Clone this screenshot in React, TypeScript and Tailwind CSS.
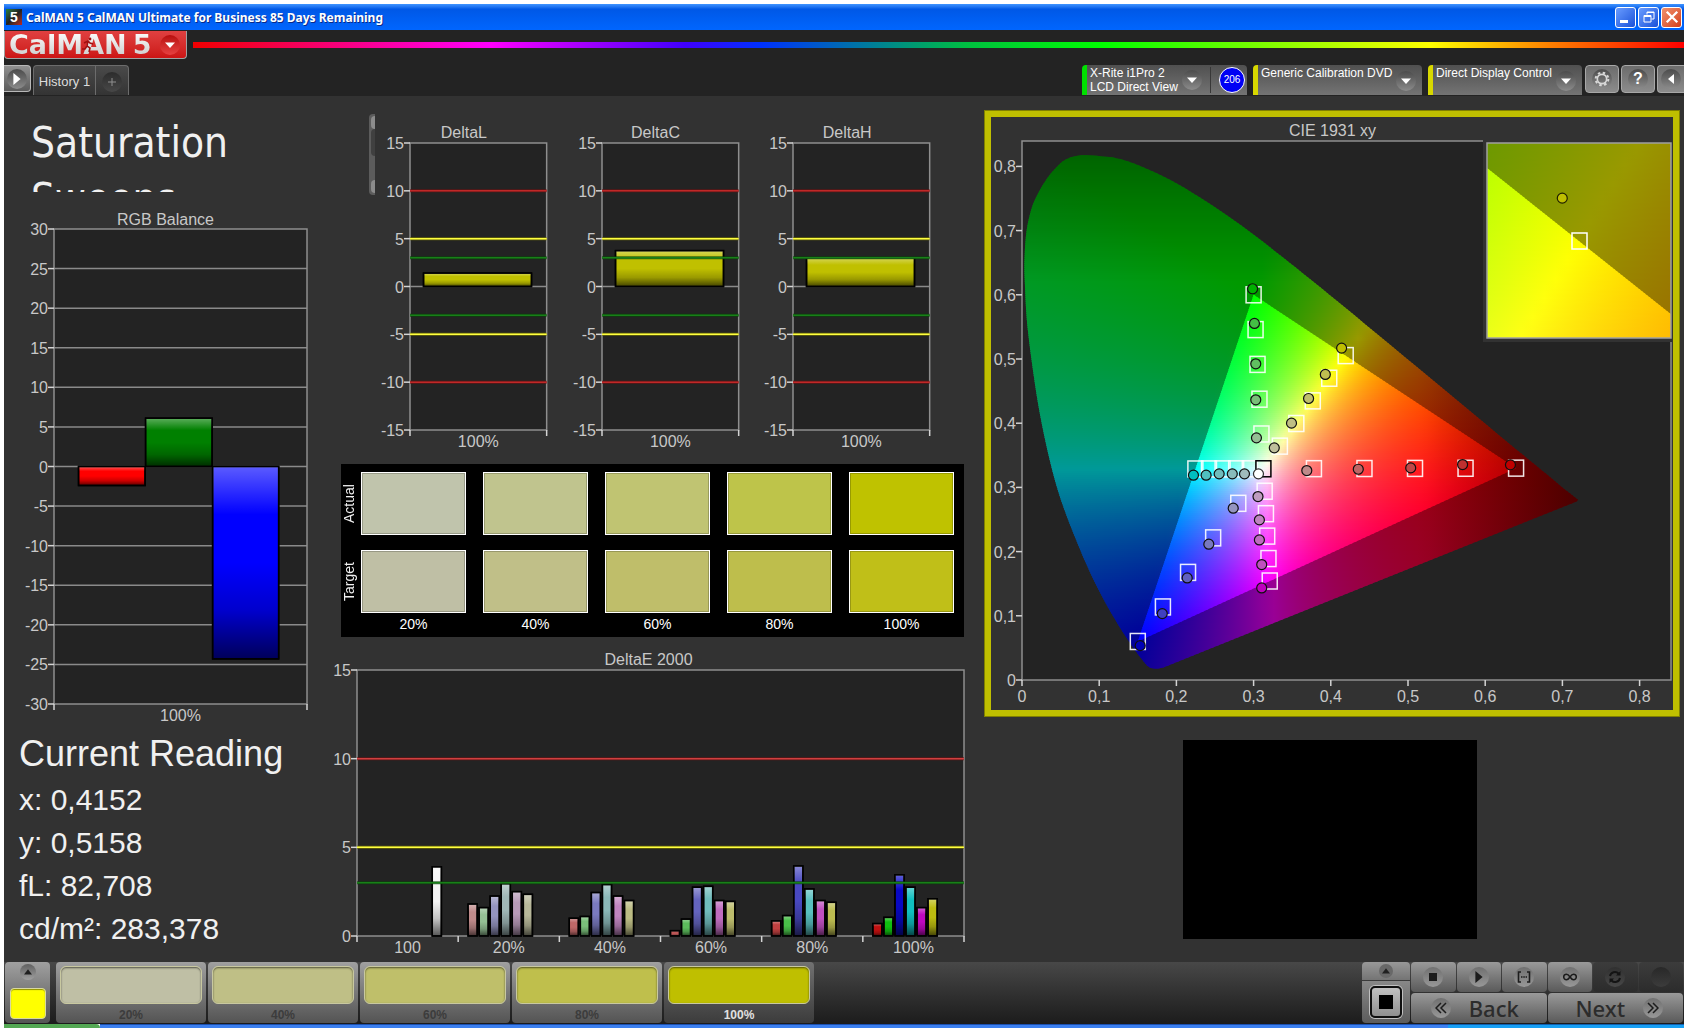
import React, { useMemo } from "react";

type Pt = [number, number];

/* ---------- charts ---------- */

type Bar = { x: number; w: number; v: number; color: string };
type Line = { v: number; color: string; edge: string };

function Chart(props: {
  id: string;
  title: string;
  min: number;
  max: number;
  ticks: number[];
  grid?: number[];
  bars: Bar[];
  lines?: Line[];
  labels: string[];
  className: string;
}) {
  const { id, title, min, max, ticks, grid = [], bars, lines = [], labels, className } = props;
  const pos = (v: number) => ((max - v) / (max - min)) * 100;
  const pc = (n: number) => `${n}%`;
  return (
    <figure className="flex flex-col">
      <figcaption className="h-[18px] text-center text-base leading-[18px] text-[#c8c8c8]">{title}</figcaption>
      <svg role="img" aria-label={title} className={className} overflow="visible">
        <defs>
          <linearGradient id={`${id}-gloss`} x1="0" y1="0" x2="0" y2="1">
            <stop offset="0" stopColor="#fff" stopOpacity="0.36" />
            <stop offset="0.25" stopColor="#fff" stopOpacity="0" />
            <stop offset="0.5" stopColor="#000" stopOpacity="0" />
            <stop offset="0.75" stopColor="#000" stopOpacity="0.2" />
            <stop offset="1" stopColor="#000" stopOpacity="0.65" />
          </linearGradient>
        </defs>
        <rect width="100%" height="100%" fill="#232323" />
        {grid.map((v) => (
          <line key={v} x1="0" x2="100%" y1={pc(pos(v))} y2={pc(pos(v))} stroke="#8a8a8a" strokeWidth="1.5" />
        ))}
        <rect width="100%" height="100%" fill="none" stroke="#8e8e8e" strokeWidth="1.5" />
        {bars.map((b, i) => {
          const top = pos(Math.max(b.v, 0));
          const h = (Math.abs(b.v) / (max - min)) * 100;
          return (
            <g key={i} stroke="#000" strokeWidth="1.5">
              <rect x={pc(b.x)} y={pc(top)} width={pc(b.w)} height={pc(h)} fill={b.color} />
              <rect x={pc(b.x)} y={pc(top)} width={pc(b.w)} height={pc(h)} fill={`url(#${id}-gloss)`} />
            </g>
          );
        })}
        {lines.map((l) => (
          <g key={l.v}>
            <line x1="0" x2="100%" y1={pc(pos(l.v))} y2={pc(pos(l.v))} stroke={l.edge} strokeWidth="3" strokeOpacity="0.75" />
            <line x1="0" x2="100%" y1={pc(pos(l.v))} y2={pc(pos(l.v))} stroke={l.color} strokeWidth="1.5" />
          </g>
        ))}
        {ticks.map((v) => (
          <g key={v}>
            <line x1="-6" x2="0" y1={pc(pos(v))} y2={pc(pos(v))} stroke="#d4d4d4" strokeWidth="1.5" />
            <text x="-6" y={pc(pos(v))} dy="6" textAnchor="end" fontSize="16" fill="#c8c8c8">
              {v}
            </text>
          </g>
        ))}
        {labels.map((l, i) => (
          <text key={l} x={pc(((i + 0.5) / labels.length) * 100)} y="100%" dy="17" textAnchor="middle" fontSize="16" fill="#c8c8c8">
            {l}
          </text>
        ))}
        {[...labels, ""].map((_, i) => (
          <svg key={i} x={pc((i / labels.length) * 100)} y="100%" overflow="visible">
            <line x1="0" x2="0" y1="0" y2="6" stroke="#d4d4d4" strokeWidth="1.5" />
          </svg>
        ))}
      </svg>
    </figure>
  );
}

const RED = { color: "#c02828", edge: "#701010" };
const YELLOW = { color: "#ffff40", edge: "#7a7a00" };
const GREEN = { color: "#188018", edge: "#0a440a" };

const deltaLines: Line[] = [
  { v: 10, ...RED },
  { v: 5, ...YELLOW },
  { v: 3, ...GREEN },
  { v: -3, ...GREEN },
  { v: -5, ...YELLOW },
  { v: -10, ...RED },
];

const deltaEGroups: { values: number[]; colors: string[] }[] = [
  { values: [1.8, 1.6, 2.25, 2.95, 2.5, 2.35], colors: ["#bf8a8a", "#94bf94", "#9494bf", "#a0b8b8", "#b89ab8", "#b8b89a"] },
  { values: [1, 1.1, 2.45, 2.9, 2.25, 2], colors: ["#bf6868", "#7abf7a", "#7a7abf", "#8ab8b8", "#bf84bf", "#bcbc84"] },
  { values: [0.3, 0.95, 2.75, 2.8, 2, 1.95], colors: ["#bf5858", "#5cbc5c", "#6464bf", "#70bcbc", "#bf6cbf", "#bcbc6c"] },
  { values: [0.85, 1.15, 3.95, 2.65, 2, 1.9], colors: ["#bf4040", "#48bf48", "#4848c0", "#58bfbf", "#bf50bf", "#bcbc50"] },
  { values: [0.7, 1.05, 3.45, 2.75, 1.6, 2.1], colors: ["#bf1010", "#10bf10", "#0808c4", "#10bfbf", "#bf08bf", "#bcbc10"] },
];

const deltaEBars: Bar[] = [
  { x: 12.4, w: 1.5, v: 3.9, color: "#f4f4f4" },
  ...deltaEGroups.flatMap((g, gi) =>
    g.values.map((v, i) => ({ x: 18.3 + gi * 16.67 + i * 1.82, w: 1.5, v, color: g.colors[i] }))
  ),
];

/* ---------- chromaticity diagram ---------- */

const W = 649;
const H = 539;
const SX = 772;
const SY = 642;
const px = (x: number) => x * SX;
const py = (y: number) => H - y * SY;

function chroma(x: number, y: number, inside: boolean): string {
  const yy = Math.max(y, 0.004);
  const X = x / yy;
  const Z = (1 - x - yy) / yy;
  const rgb = [
    3.2406 * X - 1.5372 - 0.4986 * Z,
    -0.9689 * X + 1.8758 + 0.0415 * Z,
    0.0557 * X - 0.204 + 1.057 * Z,
  ].map((c) => Math.max(c, 0));
  const m = Math.max(...rgb, 0.0001);
  const clamp = (n: number) => Math.min(1, Math.max(0, n));
  const f =
    (inside ? 1 : 0.6) *
    (1 - 0.5 * clamp((x - 0.52) / 0.2)) *
    (1 - 0.35 * clamp((y - 0.62) / 0.2));
  return `rgb(${rgb.map((c) => Math.round((255 * f * c) / m)).join(",")})`;
}

function Field(props: {
  id: string;
  inside: boolean;
  box: [number, number, number, number];
  toXY: (u: number, v: number) => Pt;
  row?: number;
  step?: number;
}) {
  const { id, inside, box, toXY, row = 2, step = 12 } = props;
  const [x0, y0, x1, y1] = box;
  const n = Math.ceil((x1 - x0) / step);
  const rows: number[] = [];
  for (let y = y0; y < y1; y += row) rows.push(y);
  return (
    <g>
      {rows.map((y) => (
        <React.Fragment key={y}>
          <linearGradient id={`${id}${y}`} gradientUnits="userSpaceOnUse" x1={x0} x2={x1} y1="0" y2="0">
            {Array.from({ length: n + 1 }, (_, i) => {
              const [cx, cy] = toXY(x0 + ((x1 - x0) * i) / n, y + row / 2);
              return <stop key={i} offset={i / n} stopColor={chroma(cx, cy, inside)} />;
            })}
          </linearGradient>
          <rect x={x0} y={y} width={x1 - x0} height={row + 1} fill={`url(#${id}${y})`} />
        </React.Fragment>
      ))}
    </g>
  );
}

const locus: Pt[] = [
  [0.184, 0.02], [0.174, 0.0175], [0.165, 0.02], [0.158, 0.028], [0.143, 0.052], [0.122, 0.091], [0.0993, 0.14], [0.0738, 0.207],
  [0.0454, 0.3], [0.0235, 0.4127], [0.0082, 0.5384], [0.0036, 0.62], [0.0034, 0.66], [0.006, 0.7], [0.0125, 0.735],
  [0.0203, 0.757], [0.03, 0.777], [0.041, 0.794], [0.0554, 0.81], [0.0725, 0.8165], [0.0963, 0.8165], [0.1256, 0.812],
  [0.1547, 0.8], [0.1929, 0.7785], [0.2296, 0.7523], [0.2658, 0.7233], [0.3016, 0.6923], [0.3373, 0.6589], [0.3731, 0.6245],
  [0.4441, 0.5547], [0.5125, 0.4866], [0.5752, 0.4242], [0.627, 0.3725], [0.6658, 0.334], [0.7, 0.3], [0.717, 0.284],
  [0.72, 0.28], [0.716, 0.277],
];

function smooth(points: Pt[]): string {
  const p = points.map(([x, y]) => [px(x), py(y)]);
  const f = (n: number) => n.toFixed(1);
  let d = `M${f(p[0][0])} ${f(p[0][1])}`;
  for (let i = 0; i < p.length - 1; i++) {
    const a = p[Math.max(i - 1, 0)];
    const b = p[i];
    const c = p[i + 1];
    const e = p[Math.min(i + 2, p.length - 1)];
    d += `C${f(b[0] + (c[0] - a[0]) / 6)} ${f(b[1] + (c[1] - a[1]) / 6)} ${f(c[0] - (e[0] - b[0]) / 6)} ${f(c[1] - (e[1] - b[1]) / 6)} ${f(c[0])} ${f(c[1])}`;
  }
  return d + "Z";
}

const WHITE: Pt = [0.3127, 0.329];
const sweeps: { name: string; end: Pt; actual: Pt[]; fills: string[] }[] = [
  {
    name: "red", end: [0.64, 0.33],
    actual: [[0.3689, 0.3262], [0.4356, 0.3283], [0.5035, 0.3304], [0.5707, 0.3356], [0.6327, 0.3351]],
    fills: ["#bf8a8a", "#bf6464", "#bf4848", "#bf3030", "#c00000"],
  },
  {
    name: "green", end: [0.3, 0.6],
    actual: [[0.3037, 0.3772], [0.3028, 0.4364], [0.3028, 0.4925], [0.3011, 0.5554], [0.2987, 0.6094]],
    fills: ["#94bf94", "#78bf78", "#60bf60", "#44bf44", "#00b000"],
  },
  {
    name: "blue", end: [0.15, 0.06],
    actual: [[0.2736, 0.2676], [0.242, 0.2115], [0.214, 0.159], [0.1817, 0.1034], [0.1531, 0.0535]],
    fills: ["#9494bf", "#7878c0", "#6060c0", "#4040c0", "#0000b8"],
  },
  {
    name: "cyan", end: [0.2246, 0.3287],
    actual: [[0.2882, 0.3211], [0.2724, 0.3211], [0.2554, 0.3211], [0.2385, 0.319], [0.2221, 0.319]],
    fills: ["#a0bcbc", "#88bcbc", "#70bcbc", "#50bfbf", "#00bfbf"],
  },
  {
    name: "magenta", end: [0.3209, 0.1542],
    actual: [[0.3057, 0.2857], [0.3075, 0.2494], [0.3075, 0.2182], [0.3105, 0.1798], [0.3105, 0.1434]],
    fills: ["#bf9cbf", "#bf84bf", "#bf6cbf", "#bf50bf", "#bf00bf"],
  },
  {
    name: "yellow", end: [0.4193, 0.5053],
    actual: [[0.3268, 0.3616], [0.3491, 0.4001], [0.3712, 0.4385], [0.3929, 0.4759], [0.414, 0.517]],
    fills: ["#bfbf9c", "#bfbf84", "#bfbf6c", "#bfbf50", "#bfbf00"],
  },
];

function CieDiagram() {
  const shape = useMemo(() => smooth(locus), []);
  const R: Pt = [0.64, 0.33];
  const G: Pt = [0.3, 0.6];
  const B: Pt = [0.15, 0.06];
  const tri = [R, G, B].map(([x, y]) => `${px(x)},${py(y)}`).join(" ");
  const mainXY = (u: number, v: number): Pt => [u / SX, (H - v) / SY];

  const ix = 465;
  const iy = 2;
  const iw = 184;
  const ih = 195;
  const cx = 557;
  const cy = 100;
  const zoom = 4080;
  const insetXY = (u: number, v: number): Pt => [0.4193 + (u - cx) / zoom, 0.5053 - (v - cy) / zoom];
  const zx = (x: number) => cx + (x - 0.4193) * zoom;
  const zy = (y: number) => cy - (y - 0.5053) * zoom;
  const edge = (x: number) => 0.6 - ((x - 0.3) * 0.27) / 0.34;

  return (
    <svg role="img" aria-label="CIE 1931 xy" viewBox={`0 0 ${W} ${H}`} className="w-full" overflow="visible">
      <defs>
        <clipPath id="locus"><path d={shape} /></clipPath>
        <clipPath id="gamut"><polygon points={tri} /></clipPath>
        <clipPath id="inset-gamut">
          <polygon points={`${ix},${zy(edge(insetXY(ix, 0)[0]))} ${ix + iw},${zy(edge(insetXY(ix + iw, 0)[0]))} ${ix + iw},${iy + ih} ${ix},${iy + ih}`} />
        </clipPath>
        <clipPath id="inset-box"><rect x={ix} y={iy} width={iw} height={ih} /></clipPath>
      </defs>
      <rect width={W} height={H} fill="#232323" stroke="#8e8e8e" strokeWidth="1.5" />
      <g clipPath="url(#locus)">
        <Field id="o" inside={false} box={[0, 12, 564, 530]} toXY={mainXY} />
      </g>
      <g clipPath="url(#gamut)">
        <Field id="i" inside box={[110, 150, 500, 504]} toXY={mainXY} step={8} />
      </g>
      {sweeps.map((s) => (
        <g key={s.name} fill="none" stroke="#fff" strokeOpacity="0.9" strokeWidth="1.5">
          {[0.2, 0.4, 0.6, 0.8, 1].map((t) => (
            <rect
              key={t}
              x={px(WHITE[0] + (s.end[0] - WHITE[0]) * t) - 7.5}
              y={py(WHITE[1] + (s.end[1] - WHITE[1]) * t) - 8}
              width="15"
              height="16"
            />
          ))}
        </g>
      ))}
      <rect x={px(WHITE[0]) - 7.5} y={py(WHITE[1]) - 8} width="15" height="16" fill="none" stroke="#000" strokeWidth="1.5" />
      {sweeps.map((s) => (
        <g key={s.name} stroke="#101010" strokeWidth="1.2">
          {s.actual.map(([x, y], i) => (
            <circle key={i} cx={px(x)} cy={py(y)} r="5" fill={s.fills[i]} />
          ))}
        </g>
      ))}
      <circle cx={px(0.3063)} cy={py(0.3211)} r="5" fill="#fff" stroke="#303030" strokeWidth="1.2" />

      <rect x={ix - 4} y={iy - 3} width={iw + 5} height={ih + 7} fill="#323232" />
      <g clipPath="url(#inset-box)">
        <Field id="p" inside={false} box={[ix, iy, ix + iw, iy + ih]} toXY={insetXY} />
        <g clipPath="url(#inset-gamut)">
          <Field id="q" inside box={[ix, iy, ix + iw, iy + ih]} toXY={insetXY} />
        </g>
      </g>
      <rect x={ix} y={iy} width={iw} height={ih} fill="none" stroke="#a0a0a0" strokeWidth="1.5" />
      <rect x={cx - 7} y={cy - 8} width="15" height="16" fill="none" stroke="#fff" strokeWidth="1.5" />
      <circle cx={zx(0.4152)} cy={zy(0.5158)} r="5" fill="#bfbf00" stroke="#202000" strokeWidth="1.2" />

      {Array.from({ length: 9 }, (_, i) => {
        const t = i === 0 ? "0" : `0,${i}`;
        return (
          <g key={i} stroke="#d4d4d4" strokeWidth="1.5">
            <line x1={px(i / 10)} x2={px(i / 10)} y1={H} y2={H + 6} />
            <line x1="-6" x2="0" y1={py(i / 10)} y2={py(i / 10)} />
            <text stroke="none" fill="#c8c8c8" fontSize="16" x={px(i / 10)} y={H + 22} textAnchor="middle">{t}</text>
            <text stroke="none" fill="#c8c8c8" fontSize="16" x="-6" y={py(i / 10) + 6} textAnchor="end">{t}</text>
          </g>
        );
      })}
    </svg>
  );
}

/* ---------- small parts ---------- */

function Knob({ children, className = "from-[#4c4c4c] to-[#8c8c8c]" }: { children?: React.ReactNode; className?: string }) {
  return (
    <span className={`flex size-5 shrink-0 items-center justify-center rounded-full bg-gradient-to-b ${className}`}>
      {children}
    </span>
  );
}

function Triangle({ d, className }: { d: string; className: string }) {
  return (
    <svg viewBox="0 0 10 10" className={className} aria-hidden="true">
      <path d={d} fill="currentColor" />
    </svg>
  );
}
const DOWN = "M0 2.5H10L5 8Z";
const UP = "M0 8H10L5 1.5Z";
const RIGHT = "M2 0V10L8 5Z";
const LEFT = "M8 0V10L2 5Z";

function SourceSelect({ label, option, className }: { label: string; option: string; className: string }) {
  return (
    <div className={`relative h-[30px] rounded-t border-l-[5px] border-[#d8d800] bg-gradient-to-b from-[#505050] to-[#747474] ${className}`}>
      <select aria-label={label} className="block h-4 w-full appearance-none bg-transparent pl-[3px] pr-5 text-xs text-white outline-none">
        <option>{option}</option>
      </select>
      <span className="pointer-events-none absolute bottom-1 right-1.5">
        <Knob><Triangle d={DOWN} className="size-2.5 text-white" /></Knob>
      </span>
    </div>
  );
}

const actual = ["bg-[#c0c4ac]", "bg-[#c0c48e]", "bg-[#c0c472]", "bg-[#bec44a]", "bg-[#bfc200]"];
const target = ["bg-[#bfbfa5]", "bg-[#c0bf88]", "bg-[#bfbe6a]", "bg-[#bebe4c]", "bg-[#c0bf18]"];
const steps = [
  { label: "20%", fill: "bg-[#bfbfa5]" },
  { label: "40%", fill: "bg-[#bfbf86]" },
  { label: "60%", fill: "bg-[#bfbf6a]" },
  { label: "80%", fill: "bg-[#bfbf4c]" },
  { label: "100%", fill: "bg-[#bfbf00]" },
];

function SwatchRow({ name, fills }: { name: string; fills: string[] }) {
  return (
    <>
      <span className="flex w-4 rotate-180 items-center justify-center text-sm leading-4 text-[#f0f0f0] [writing-mode:vertical-rl]">{name}</span>
      {fills.map((c) => (
        <span key={c} className={`h-[63px] border border-white ring-1 ring-inset ring-black/20 ${c}`} />
      ))}
    </>
  );
}

const keyBase = "flex h-[30px] items-center justify-center rounded-sm bg-gradient-to-b";
const keyOn = "from-[#9a9a9a] to-[#5a5a5a]";
const keyOff = "from-[#3c3c3c] to-[#2c2c2c]";
const keyKnob = "from-[#707070] to-[#989898] text-[#1c1c1c]";

/* ---------- page ---------- */

export default function App() {
  return (
    <div className="flex min-h-screen flex-col bg-white px-1 pt-1 font-['Liberation_Sans',Arial,sans-serif]">
      <header>
        <div className="flex h-[26px] items-center gap-1 bg-gradient-to-b from-[#3f94ff] via-[#0058e6] via-20% to-[#0066ff] px-0.5">
          <span className="flex size-4 items-center justify-center bg-gradient-to-br from-[#1b8040] via-[#202020] to-[#c02020] text-sm font-bold leading-4 text-white">5</span>
          <h1 className="flex-1 pt-0.5 font-['Noto_Sans','Open_Sans',sans-serif] text-xs font-bold text-white [text-shadow:1px_1px_0_#0a2a88]">
            CalMAN 5 CalMAN Ultimate for Business 85 Days Remaining
          </h1>
          <div className="flex gap-0.5">
            <button aria-label="Minimize" className="flex size-[21px] items-end rounded-[3px] border border-white bg-gradient-to-br from-[#6a9cff] to-[#1a4fd8] p-1">
              <span className="h-[3px] w-2 bg-white" />
            </button>
            <button aria-label="Restore" className="flex size-[21px] items-center justify-center rounded-[3px] border border-white bg-gradient-to-br from-[#6a9cff] to-[#1a4fd8] text-white">
              <svg viewBox="0 0 12 12" className="size-3" fill="none" stroke="currentColor">
                <path d="M4 3.5V1H11V8H8.5M4 1.5H11M1 4.5H8V11H1ZM1 5.5H8" />
              </svg>
            </button>
            <button aria-label="Close" className="flex size-[21px] items-center justify-center rounded-[3px] border border-white bg-gradient-to-br from-[#f0906c] to-[#d43c14] text-white">
              <svg viewBox="0 0 12 12" className="size-3.5" stroke="currentColor" strokeWidth="2">
                <path d="M1.5 1.5L10.5 10.5M10.5 1.5L1.5 10.5" />
              </svg>
            </button>
          </div>
        </div>

        <div className="bg-[#232323]">
          <div className="flex h-[35px] items-start gap-1.5 pt-px">
            <button className="flex h-7 w-[183px] items-center justify-between rounded-b border border-t-0 border-[#a0a0a0] bg-gradient-to-b from-[#e04040] to-[#cc1414] pl-1 pr-1.5">
              <span className="relative flex gap-1.5 bg-gradient-to-b from-white to-[#c8c8c8] bg-clip-text font-['DejaVu_Sans',sans-serif] text-[27px] font-bold leading-7 text-transparent">
                <span>CalMAN</span>
                <span>5</span>
                <svg viewBox="0 0 12 16" className="absolute left-[73px] top-1.5 h-4 w-3" fill="none" stroke="#a01010" strokeWidth="1.6">
                  <circle cx="8" cy="2" r="1.4" fill="#a01010" stroke="none" />
                  <path d="M2 6L6 4L8 6L11 7M6 4L5 9L8 11L7 15M5 9L3 12L0 12" />
                </svg>
              </span>
              <Knob className="from-[#b80c0c] to-[#e84040]"><Triangle d={DOWN} className="size-2.5 text-white" /></Knob>
            </button>
            <div className="mt-[11px] h-1.5 flex-1 bg-[linear-gradient(90deg,#f00000,#ff00ff_20%,#4000ff_33%,#0030ff_38%,#00c040_52%,#00ff00_61%,#ffff00_83%,#ff8000_91%,#ff0000)]" />
          </div>

          <div className="flex h-[31px] items-start justify-between">
            <nav className="flex items-start gap-0.5">
              <button aria-label="Show panel" className="flex h-[27px] w-[27px] items-center justify-center rounded-r border border-l-0 border-[#b8b8b8] bg-gradient-to-b from-[#909090] to-[#5c5c5c]">
                <Knob><Triangle d={RIGHT} className="size-3 text-white" /></Knob>
              </button>
              <div className="flex h-[30px] rounded-t border border-b-0 border-[#6c6c6c] bg-gradient-to-b from-[#4a4a4a] to-[#343434]">
                <button className="w-[62px] border-r border-[#6c6c6c] pt-0.5 text-[13px] text-[#dcdcdc]">History 1</button>
                <button aria-label="Add tab" className="flex w-8 items-center justify-center pt-0.5">
                  <Knob className="from-[#2c2c2c] to-[#484848]">
                    <svg viewBox="0 0 8 8" className="size-2" stroke="#909090"><path d="M4 0V8M0 4H8" /></svg>
                  </Knob>
                </button>
              </div>
            </nav>
            <div className="flex items-start">
              <button className="flex h-[30px] w-[165px] items-center rounded-t border-l-[5px] border-[#00e000] bg-gradient-to-b from-[#505050] to-[#747474] pl-[3px] pr-0.5 text-left text-xs leading-[14px] text-white">
                <span className="w-[92px]">X-Rite i1Pro 2<br />LCD Direct View</span>
                <Knob><Triangle d={DOWN} className="size-2.5 text-white" /></Knob>
                <span className="ml-2 h-[26px] w-px bg-[#383838]" />
                <span className="ml-auto flex size-[26px] items-center justify-center rounded-full border border-white bg-[#0000f4] text-[10px] text-white">206</span>
              </button>
              <SourceSelect label="Source" option="Generic Calibration DVD" className="ml-1.5 w-[169px]" />
              <SourceSelect label="Display control" option="Direct Display Control" className="ml-1.5 w-[154px]" />
              <button aria-label="Settings" className="ml-[3px] flex h-7 w-[34px] items-center justify-center rounded border border-[#a8a8a8] bg-gradient-to-b from-[#6c6c6c] to-[#8c8c8c]">
                <Knob>
                  <svg viewBox="0 0 24 24" className="size-4" fill="none" stroke="#d8d8d8">
                    <circle cx="12" cy="12" r="7" strokeWidth="2.5" />
                    <circle cx="12" cy="12" r="9.5" strokeWidth="3" strokeDasharray="3.73 3.73" />
                  </svg>
                </Knob>
              </button>
              <button aria-label="Help" className="ml-0.5 flex h-7 w-[34px] items-center justify-center rounded border border-[#a8a8a8] bg-gradient-to-b from-[#6c6c6c] to-[#8c8c8c]">
                <Knob><span className="text-base font-bold text-white">?</span></Knob>
              </button>
              <button aria-label="Hide panel" className="ml-0.5 flex h-7 w-[27px] items-center justify-center rounded-l border border-r-0 border-[#a8a8a8] bg-gradient-to-b from-[#6c6c6c] to-[#8c8c8c]">
                <Knob><Triangle d={LEFT} className="size-2.5 text-white" /></Knob>
              </button>
            </div>
          </div>
        </div>
      </header>

      <main className="grid flex-1 grid-cols-[317fr_623fr_696fr] content-start gap-x-5 bg-[#323232] pr-1">
        <section className="flex flex-col">
          <h2 className="ml-[27px] mt-[19px] h-[77px] w-56 overflow-hidden font-['DejaVu_Sans_Condensed','DejaVu_Sans',sans-serif] text-[42px] leading-[56px] text-[#f0f0f0]">
            Saturation Sweeps
          </h2>
          <div className="mt-[19px] pl-5 pr-3.5">
            <Chart
              id="rgb"
              title="RGB Balance"
              min={-30}
              max={30}
              ticks={[30, 25, 20, 15, 10, 5, 0, -5, -10, -15, -20, -25, -30]}
              grid={[25, 20, 15, 10, 5, 0, -5, -10, -15, -20, -25]}
              labels={["100%"]}
              bars={[
                { x: 9.7, w: 26.3, v: -2.4, color: "#ff0000" },
                { x: 36.2, w: 26.3, v: 6.1, color: "#008000" },
                { x: 62.7, w: 26.1, v: -24.3, color: "#0000ff" },
              ]}
              className="ml-[30px] h-[475px] w-[calc(100%-30px)]"
            />
          </div>
          <div className="mt-[29px] pl-[15px] text-[#f0f0f0]">
            <h2 className="text-4xl leading-[42px]">Current Reading</h2>
            <div className="mt-[3px] text-[30px] leading-[43px]">
              <p>x: 0,4152</p>
              <p>y: 0,5158</p>
              <p>fL: 82,708</p>
              <p>cd/m²: 283,378</p>
            </div>
          </div>
        </section>

        <section className="flex flex-col">
          <div className="flex pt-[18px]">
            <div className="ml-7 flex h-[81px] w-1.5 flex-col justify-between rounded-l-sm bg-[#5c5c5c] pl-0.5">
              <span className="mt-0.5 h-3.5 rounded-l bg-[#8c8c8c]" />
              <span className="mb-6 h-7 rounded-l bg-[#404040]" />
              <span className="mb-0.5 h-3.5 rounded-l bg-[#8c8c8c]" />
            </div>
            <div className="ml-1.5 mr-[34px] mt-2.5 grid flex-1 grid-cols-3 gap-x-[26px]">
              {[
                { id: "dl", title: "DeltaL", v: 1.4 },
                { id: "dc", title: "DeltaC", v: 3.75 },
                { id: "dh", title: "DeltaH", v: 3 },
              ].map((c) => (
                <Chart
                  key={c.id}
                  id={c.id}
                  title={c.title}
                  min={-15}
                  max={15}
                  ticks={[15, 10, 5, 0, -5, -10, -15]}
                  grid={[0]}
                  labels={["100%"]}
                  lines={deltaLines}
                  bars={[{ x: 9.9, w: 79, v: c.v, color: "#c0c000" }]}
                  className="ml-[29px] mt-px h-[287px] w-[calc(100%-29px)]"
                />
              ))}
            </div>
          </div>

          <div className="mt-[34px] grid h-[173px] grid-cols-[3px_repeat(5,1fr)] grid-rows-[63px_63px_auto] gap-x-[17px] gap-y-[15px] bg-black pr-[10px] pt-2">
            <SwatchRow name="Actual" fills={actual} />
            <SwatchRow name="Target" fills={target} />
            <span />
            {steps.map((s) => (
              <span key={s.label} className="-mt-3 text-center text-sm leading-4 text-white">{s.label}</span>
            ))}
          </div>

          <div className="-ml-2 mt-3.5">
            <Chart
              id="de"
              title="DeltaE 2000"
              min={0}
              max={15}
              ticks={[15, 10, 5, 0]}
              labels={["100", "20%", "40%", "60%", "80%", "100%"]}
              lines={[{ v: 10, color: "#d04040", edge: "#701010" }, { v: 5, ...YELLOW }, { v: 3, ...GREEN }]}
              bars={deltaEBars}
              className="ml-6 mt-px h-[266px] w-[calc(100%-24px)]"
            />
          </div>
        </section>

        <section className="flex flex-col pt-[14px]">
          <figure className="border-[7px] border-[#bfbf00] bg-[#323232] pb-[30px] pl-[31px] pr-0.5 outline-1 -outline-offset-1 outline-[#808000]">
            <figcaption className="pb-px pr-7 pt-[5px] text-center text-base leading-[18px] text-[#c8c8c8]">CIE 1931 xy</figcaption>
            <CieDiagram />
          </figure>
          <div className="mr-1 mt-[23px] h-[199px] w-[294px] self-center bg-black" />
        </section>
      </main>

      <footer>
        <div className="flex h-[62px] justify-between bg-gradient-to-b from-[#484848] to-[#1c1c1c] px-px pb-px">
          <div className="flex gap-0.5">
            <button aria-label="Choose color" className="mr-1 flex w-[45px] flex-col items-center justify-between rounded bg-gradient-to-b from-[#a0a0a0] to-[#545454] pb-1 pt-0.5">
              <span className="flex size-4 items-center justify-center rounded-full bg-gradient-to-b from-[#606060] to-[#a0a0a0]">
                <Triangle d={UP} className="size-2 text-[#202020]" />
              </span>
              <span className="h-[31px] w-9 rounded border border-[#d8d8a0] bg-[#ffff00] shadow-[inset_0_1px_1px_#909000]" />
            </button>
            {steps.map((s, i) => (
              <button
                key={s.label}
                className={`flex w-[150px] flex-col items-center rounded bg-gradient-to-b px-1 pt-1 text-xs font-bold leading-4 ${
                  i === 4 ? "from-[#727272] to-[#3c3c3c] text-[#e0e0e0]" : "from-[#a0a0a0] to-[#545454] text-[#3c3c3c]"
                }`}
              >
                <span className={`mb-[3px] block h-[38px] w-full rounded-md border border-[#c8c8a0] shadow-[inset_0_1px_2px_#00000090] ${s.fill}`} />
                {s.label}
              </button>
            ))}
          </div>

          <div className="flex gap-px">
            <div className="flex w-12 flex-col gap-px">
              <button aria-label="Expand" className="flex h-[18px] items-center justify-center rounded-t bg-gradient-to-b from-[#989898] to-[#747474]">
                <span className="flex size-3.5 items-center justify-center rounded-full bg-[#686868]">
                  <Triangle d={UP} className="size-2 text-[#202020]" />
                </span>
              </button>
              <button aria-label="Pattern window" className="flex flex-1 items-center justify-center rounded-b bg-gradient-to-b from-[#888888] to-[#5c5c5c]">
                <span className="flex size-8 items-center justify-center rounded-[5px] border-2 border-[#101010] bg-gradient-to-b from-[#c0c0c0] to-[#909090] ring-1 ring-[#c0c0c0]">
                  <span className="size-3.5 bg-black" />
                </span>
              </button>
            </div>
            <div className="flex w-[272px] flex-col gap-px">
              <div className="grid grid-cols-6 gap-px">
                <button aria-label="Stop" className={`${keyBase} ${keyOn}`}><Knob className={keyKnob}><span className="size-2 bg-current" /></Knob></button>
                <button aria-label="Read" className={`${keyBase} ${keyOn}`}><Knob className={keyKnob}><Triangle d={RIGHT} className="size-3" /></Knob></button>
                <button aria-label="Read series" className={`${keyBase} ${keyOn}`}>
                  <Knob className={keyKnob}>
                    <svg viewBox="0 0 14 12" className="h-3 w-3.5" fill="none" stroke="currentColor" strokeWidth="1.6">
                      <path d="M4 1H1.5V11H4M10 1H12.5V11H10" /><path d="M4 6H10" strokeDasharray="1.5 0.8" />
                    </svg>
                  </Knob>
                </button>
                <button aria-label="Read continuously" className={`${keyBase} ${keyOn}`}>
                  <Knob className={keyKnob}>
                    <svg viewBox="0 0 14 8" className="h-2 w-3.5" fill="none" stroke="currentColor" strokeWidth="1.5">
                      <path d="M7 4C5.500 1.800 4.500 1.200 3.500 1.200A2.800 2.800 0 0 0 3.500 6.800C4.500 6.800 5.500 6.200 7 4C8.500 1.800 9.500 1.200 10.500 1.200A2.800 2.800 0 0 1 10.500 6.800C9.500 6.800 8.500 6.200 7 4Z" />
                    </svg>
                  </Knob>
                </button>
                <button aria-label="Refresh" className={`${keyBase} ${keyOff}`}>
                  <Knob className="from-[#303030] to-[#484848] text-[#141414]">
                    <svg viewBox="0 0 14 14" className="size-3.5" fill="none" stroke="currentColor" strokeWidth="2">
                      <path d="M2 6A5 5 0 0 1 10.500 3.500M12 8A5 5 0 0 1 3.500 10.500" /><path d="M12.500 1V5.500H8ZM1.500 13V8.500H6Z" fill="currentColor" stroke="none" />
                    </svg>
                  </Knob>
                </button>
                <button aria-label="Record" className={`${keyBase} ${keyOff}`}><Knob className="from-[#282828] to-[#3c3c3c]" /></button>
              </div>
              <div className="grid flex-1 grid-cols-2 gap-px font-['Noto_Sans','Open_Sans',sans-serif] text-[22px] font-medium leading-7 text-[#2c2c2c]">
                <button className={`flex items-center justify-center gap-[18px] rounded-sm bg-gradient-to-b pr-2 ${keyOn}`}>
                  <Knob className={keyKnob}>
                    <svg viewBox="0 0 12 12" className="size-3" fill="none" stroke="currentColor" strokeWidth="1.5"><path d="M6 1L1 6L6 11M11 1L6 6L11 11" /></svg>
                  </Knob>
                  Back
                </button>
                <button className={`flex items-center justify-center gap-[18px] rounded-sm bg-gradient-to-b pl-2 ${keyOn}`}>
                  Next
                  <Knob className={keyKnob}>
                    <svg viewBox="0 0 12 12" className="size-3" fill="none" stroke="currentColor" strokeWidth="1.5"><path d="M1 1L6 6L1 11M6 1L11 6L6 11" /></svg>
                  </Knob>
                </button>
              </div>
            </div>
          </div>
        </div>
        <div className="flex h-1">
          <span className="w-24 rounded-tr bg-[#54a854]" />
          <span className="flex-1 border-t border-[#1c50b0] bg-[#3c80f0]" />
          <span className="w-[236px] border-t border-[#1060b0] bg-[#18a0f4]" />
        </div>
      </footer>
    </div>
  );
}
